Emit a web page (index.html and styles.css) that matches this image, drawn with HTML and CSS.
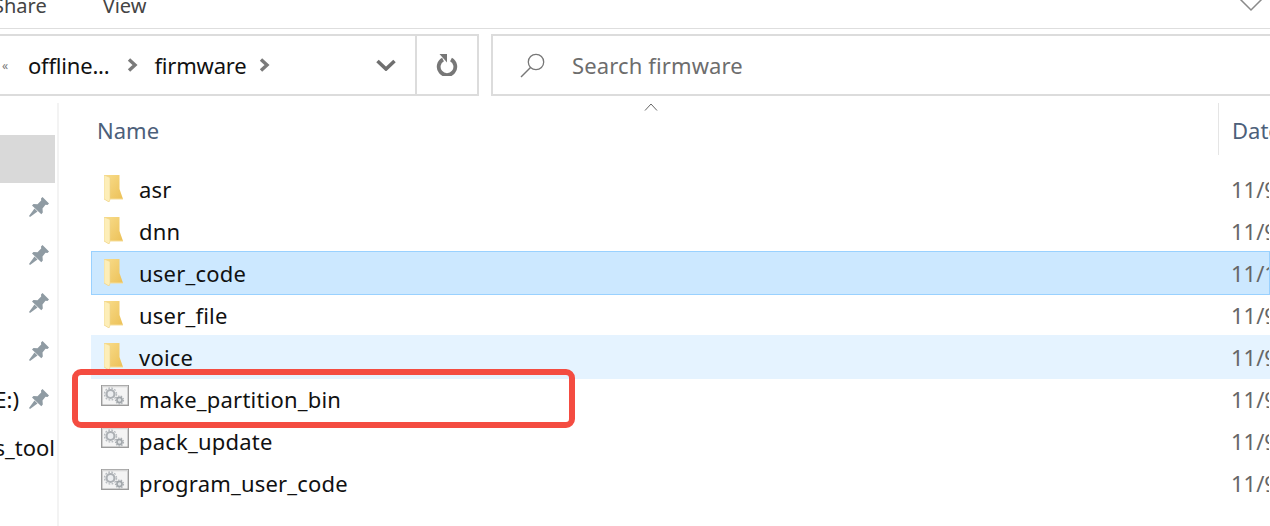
FILE: index.html
```html
<!DOCTYPE html>
<html lang="en">
<head>
    <meta charset="UTF-8">
    <meta name="viewport" content="width=device-width, initial-scale=1.0">
    <title>firmware</title>
    <link rel="stylesheet" href="styles.css">
</head>
<body>
    <!-- Icons -->
    <svg class="defs" width="0" height="0">
        <defs>
            <linearGradient id="folderGold" x1="0" y1="0" x2="1" y2="1">
                <stop offset="0" stop-color="#f9dd8c"/>
                <stop offset="1" stop-color="#ebbf55"/>
            </linearGradient>
            <symbol id="folder" viewBox="0 0 19 27">
                <path d="M0 0H15.500V14L19 24H5.500L5 27L0 24Z" fill="url(#folderGold)"/>
                <path d="M0 0L6 2.500V24.500L5 27L0 24Z" fill="#fdeeb8"/>
                <path d="M0 0L6 2.500V24.500L5 27L0 24Z" fill="none" stroke="#eed48c" stroke-width=".6"/>
                <path d="M6 24H19" stroke="#f6dd99" stroke-width="1"/>
            </symbol>
            <symbol id="exe" viewBox="0 0 28 21">
                <rect x=".7" y=".7" width="26.600" height="19.600" fill="#f4f4f4" stroke="#9b9b9b" stroke-width="1.400"/>
                <path d="M1 1.500H27" stroke="#d8d8d8" stroke-width="1.600"/>
                <circle cx="9.500" cy="9" r="4" fill="#eceef0" stroke="#acb0b4" stroke-width="2.200"/>
                <circle cx="9.500" cy="9" r="6" fill="none" stroke="#b8bcc0" stroke-width="1.400" stroke-dasharray="1.800 1.350"/>
                <circle cx="18.500" cy="15" r="2.600" fill="#dfe2e4" stroke="#a0a5a9" stroke-width="1.600"/>
                <circle cx="18.500" cy="15" r="4" fill="none" stroke="#acb0b4" stroke-width="1.200" stroke-dasharray="1.500 1.300"/>
            </symbol>
            <symbol id="pin" viewBox="0 0 20 20">
                <path d="M13.500 0L20 6.500L18.500 8L16.500 7.800L13.500 11.500L13.800 15.500L12.300 17.200L3 8.500L4.500 7L8.500 7.300L12.200 3.500L12 1.500Z" fill="#8f9ba3"/>
                <path d="M5.500 11.500L0 19L1 20L8.500 14.500Z" fill="#8f9ba3"/>
            </symbol>
        </defs>
    </svg>

    <!-- Ribbon tabs -->
    <div class="ribbon">
        <span class="tab tab-share">Share</span>
        <span class="tab">View</span>
        <svg class="ribbon-toggle" width="24" height="12" viewBox="0 0 24 12"><path d="M1 -1L12 10L23 -1" fill="none" stroke="#8a8a8a" stroke-width="1.500"/></svg>
    </div>

    <!-- Address and search -->
    <div class="toolbar">
        <div class="address">
            <div class="crumbs">
                <span class="overflow">«</span>
                <span class="crumb">offline...</span>
                <svg class="sep" width="11" height="14" viewBox="0 0 11 14"><path d="M2 1.500L8 7L2 12.500" fill="none" stroke="#7a7a7a" stroke-width="3.400"/></svg>
                <span class="crumb">firmware</span>
                <svg class="sep" width="11" height="14" viewBox="0 0 11 14"><path d="M2 1.500L8 7L2 12.500" fill="none" stroke="#7a7a7a" stroke-width="3.400"/></svg>
                <svg class="history" width="20" height="12" viewBox="0 0 20 12"><path d="M1.500 2L10 10L18.500 2" fill="none" stroke="#6f6f6f" stroke-width="3.600"/></svg>
            </div>
            <div class="refresh">
                <svg width="22" height="22" viewBox="0 0 22 22"><path d="M7 5.500A8.300 8.300 0 1 0 15 5.500" fill="none" stroke="#777" stroke-width="3.800"/><path d="M3.500 0H11V8.500Z" fill="#777"/></svg>
            </div>
        </div>
        <div class="search">
            <svg width="26" height="25" viewBox="0 0 26 25"><circle cx="16" cy="9" r="7.700" fill="none" stroke="#777" stroke-width="1.300"/><path d="M10.500 14.500L1 24" stroke="#777" stroke-width="1.500"/></svg>
            <span class="search-text">Search firmware</span>
        </div>
    </div>

    <div class="main">
        <!-- Navigation pane -->
        <nav class="sidebar">
            <div class="nav-row active"></div>
            <div class="nav-row"><svg class="pin"><use href="#pin"/></svg></div>
            <div class="nav-row"><svg class="pin"><use href="#pin"/></svg></div>
            <div class="nav-row"><svg class="pin"><use href="#pin"/></svg></div>
            <div class="nav-row"><svg class="pin"><use href="#pin"/></svg></div>
            <div class="nav-row"><span class="nav-drive">E:)</span><svg class="pin"><use href="#pin"/></svg></div>
            <div class="nav-row"><span class="nav-text">s_tool</span></div>
        </nav>

        <!-- File list -->
        <section class="content">
            <div class="head">
                <span class="head-name">Name</span>
                <svg class="sort" width="14" height="8" viewBox="0 0 14 8"><path d="M1 7.500L7 1L13 7.500" fill="none" stroke="#666" stroke-width="1"/></svg>
                <span class="head-date">Date</span>
            </div>
            <div class="row">
                <svg class="ico-folder"><use href="#folder"/></svg><span class="name">asr</span><span class="date">11/9</span>
            </div>
            <div class="row">
                <svg class="ico-folder"><use href="#folder"/></svg><span class="name">dnn</span><span class="date">11/9</span>
            </div>
            <div class="row selected">
                <svg class="ico-folder"><use href="#folder"/></svg><span class="name">user_code</span><span class="date">11/1</span>
            </div>
            <div class="row">
                <svg class="ico-folder"><use href="#folder"/></svg><span class="name">user_file</span><span class="date">11/9</span>
            </div>
            <div class="row hover">
                <svg class="ico-folder"><use href="#folder"/></svg><span class="name">voice</span><span class="date">11/9</span>
            </div>
            <div class="row">
                <svg class="ico-exe"><use href="#exe"/></svg><span class="name">make_partition_bin</span><span class="date">11/9</span>
            </div>
            <div class="row">
                <svg class="ico-exe"><use href="#exe"/></svg><span class="name">pack_update</span><span class="date">11/9</span>
            </div>
            <div class="row">
                <svg class="ico-exe"><use href="#exe"/></svg><span class="name">program_user_code</span><span class="date">11/9</span>
            </div>
            <div class="callout"></div>
        </section>
    </div>
</body>
</html>
```

FILE: styles.css
```css
html, body {
    margin: 0;
    height: 526px;
    overflow: hidden;
}
body {
    font-family: "Noto Sans", "Open Sans", sans-serif;
    font-size: 22px;
    color: #111;
    background: #fff;
}
.defs {
    display: block;
    height: 0;
}

/* ribbon */
.ribbon {
    display: flex;
    align-items: flex-start;
    height: 28px;
    overflow: hidden;
    border-bottom: 1px solid #dedede;
}
.tab {
    margin-top: -8px;
    font-size: 20px;
    line-height: 28px;
    color: #444;
}
.tab-share {
    margin-left: -7px;
    margin-right: 56px;
}
.ribbon-toggle {
    margin-left: auto;
    margin-right: 7px;
}

/* address + search */
.toolbar {
    display: flex;
    height: 62px;
    margin-top: 5px;
}
.address {
    display: flex;
    width: 479px;
    box-sizing: border-box;
    border: 2px solid #dcdcdc;
    border-left: none;
}
.crumbs {
    display: flex;
    align-items: center;
    width: 417px;
    border-right: 2px solid #dcdcdc;
    box-sizing: border-box;
    letter-spacing: -.2px;
}
.overflow {
    width: 28px;
    padding-left: 2px;
    box-sizing: border-box;
    font-size: 12px;
    color: #777;
}
.crumb {
    line-height: 30px;
}
.sep {
    margin: 0 17px 0 17px;
}
.crumb + .sep + .crumb + .sep {
    margin-left: 12px;
}
.history {
    margin-left: auto;
    margin-right: 19px;
}
.refresh {
    flex: 1;
    display: flex;
    align-items: center;
    justify-content: center;
}
.search {
    flex: 1;
    display: flex;
    align-items: center;
    gap: 26px;
    margin: 0 -5px 0 12px;
    padding-left: 27px;
    border: 2px solid #dcdcdc;
    color: #6d6d6d;
}
.search-text {
    letter-spacing: .13px;
}

/* main area */
.main {
    display: flex;
    margin-top: 7px;
}
.sidebar {
    width: 59px;
    height: 423px;
    padding-top: 32px;
    box-sizing: border-box;
    border-right: 2px solid #f3f3f3;
}
.nav-row {
    display: flex;
    align-items: center;
    justify-content: flex-end;
    width: 55px;
    height: 48px;
    overflow: hidden;
}
.nav-row.active {
    background: #d9d9d9;
}
.pin {
    flex-shrink: 0;
    width: 20px;
    height: 20px;
    margin-right: 6px;
}
.nav-drive {
    margin-right: 10px;
}
.nav-text {
    white-space: nowrap;
}

/* file list */
.content {
    position: relative;
    flex: 1;
    padding-left: 32px;
    min-width: 0;
}
.head {
    display: flex;
    height: 52px;
    margin-bottom: 14px;
    align-items: center;
}
.head-name {
    flex: 0 0 1127px;
    padding: 1px 0 0 6px;
    box-sizing: border-box;
    color: #4c607a;
}
.sort {
    position: absolute;
    left: 585px;
    top: 0;
}
.head-date {
    align-self: stretch;
    flex: 0 0 auto;
    display: flex;
    align-items: center;
    padding: 1px 0 0 13px;
    border-left: 1px solid #e5e5e5;
    color: #4c607a;
    white-space: nowrap;
}
.row {
    display: flex;
    align-items: center;
    height: 44px;
    margin-top: -2px;
    box-sizing: border-box;
    border: 1px solid transparent;
}
.row:first-of-type {
    margin-top: 0;
}
.row.selected {
    background: #cce8ff;
    border-color: #99d1ff;
}
.row.hover {
    background: #e5f3ff;
    border-color: #e5f3ff;
}
.ico-folder {
    width: 19px;
    height: 27px;
    margin: -2px 16px 0 12px;
}
.ico-exe {
    width: 28px;
    height: 21px;
    margin: -8px 10px 0 9px;
}
.name {
    flex: 1;
    line-height: 30px;
    letter-spacing: .2px;
}
.date {
    width: 38px;
    overflow: hidden;
    color: #666;
}

/* red annotation */
.callout {
    position: absolute;
    left: 13px;
    top: 266px;
    width: 503px;
    height: 59px;
    box-sizing: border-box;
    border: 6px solid #f44c41;
    border-radius: 9px;
}
```
